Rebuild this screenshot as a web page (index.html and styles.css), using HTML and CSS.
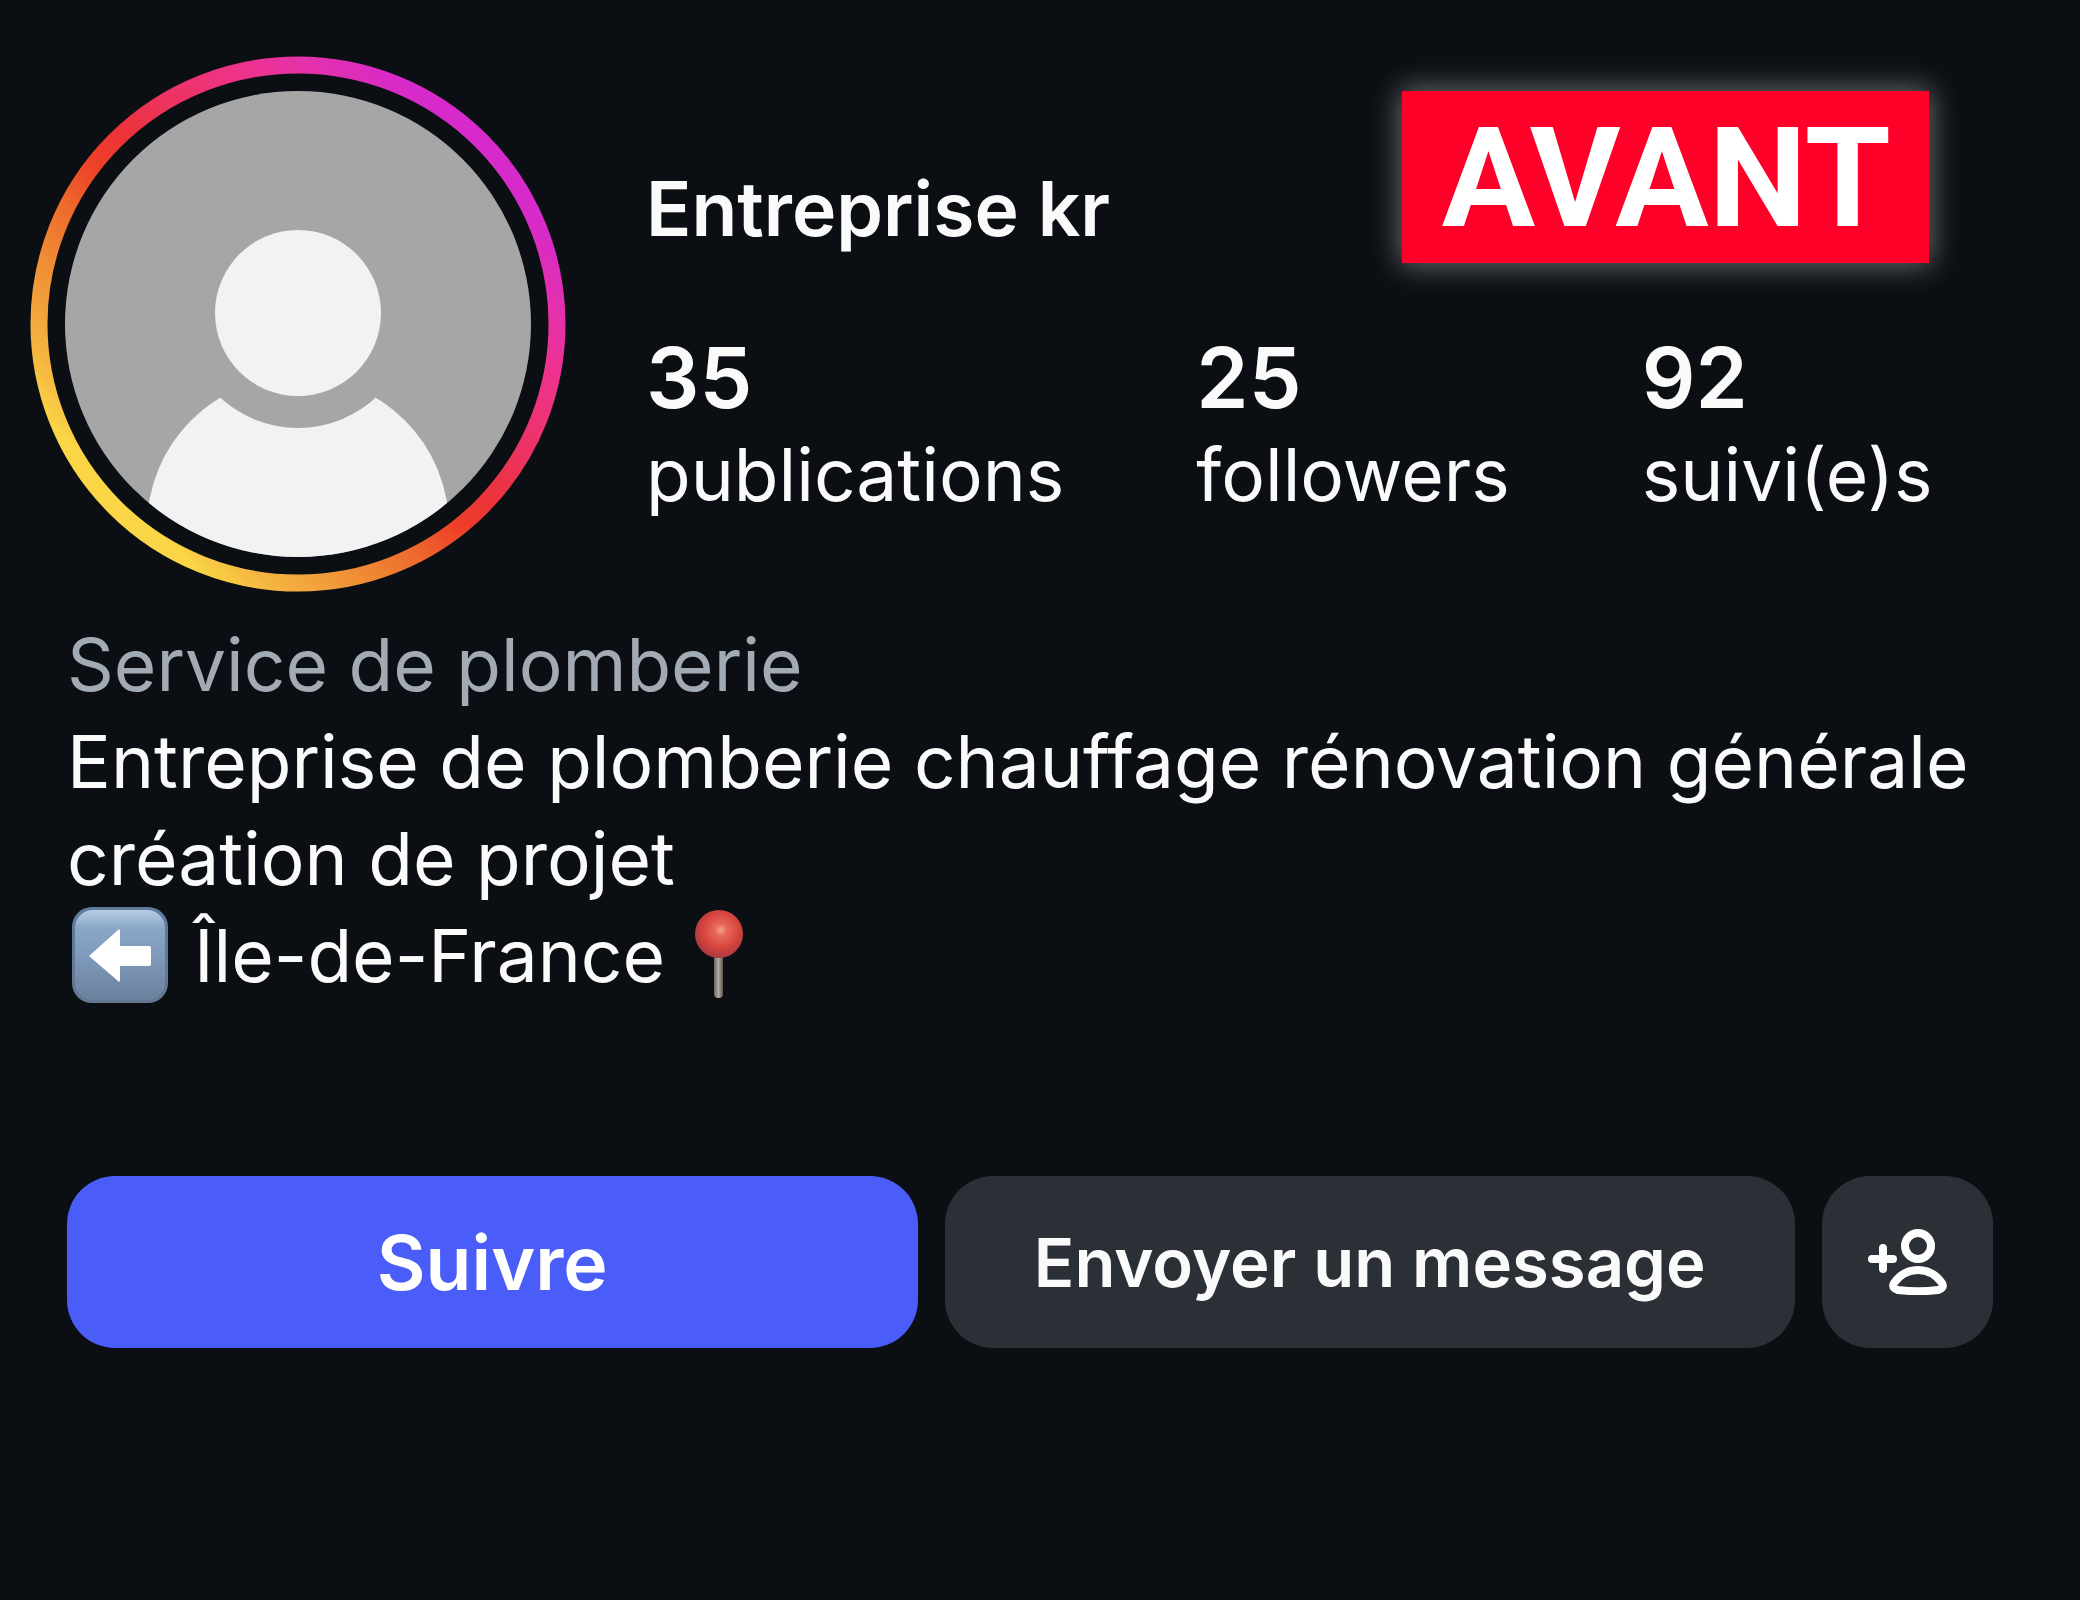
FILE: index.html
```html
<!DOCTYPE html>
<html lang="fr">

<head>
	<meta charset="UTF-8">
	<meta name="viewport"
				content="width=device-width, initial-scale=1.0">
	<title>Entreprise kr</title>
	<link rel="stylesheet" href="styles.css">
</head>

<body>
	<main class="profile">
		<span class="badge">AVANT</span>

		<header class="profile-header">
			<svg class="avatar" viewBox="0 0 536 536" role="img" aria-label="Photo de profil">
				<defs>
					<linearGradient id="ring" gradientUnits="userSpaceOnUse" x1="78" y1="458" x2="458" y2="78">
						<stop offset="0.04" stop-color="#fad646" />
						<stop offset="0.12" stop-color="#f5b540" />
						<stop offset="0.25" stop-color="#f08d35" />
						<stop offset="0.35" stop-color="#ee6a2d" />
						<stop offset="0.44" stop-color="#ee4028" />
						<stop offset="0.52" stop-color="#ec3338" />
						<stop offset="0.62" stop-color="#ed3360" />
						<stop offset="0.76" stop-color="#ee338b" />
						<stop offset="0.85" stop-color="#e531aa" />
						<stop offset="0.96" stop-color="#d62acb" />
					</linearGradient>
					<clipPath id="photo">
						<circle cx="268" cy="268" r="233" />
					</clipPath>
				</defs>
				<circle cx="268" cy="268" r="259" fill="none" stroke="url(#ring)" stroke-width="17" />
				<g clip-path="url(#photo)">
					<rect width="536" height="536" fill="#a6a6a6" />
					<circle cx="268" cy="471" r="151" fill="#f2f2f2" />
					<circle cx="268" cy="257" r="115" fill="#a6a6a6" />
					<circle cx="268" cy="257" r="83" fill="#f2f2f2" />
				</g>
			</svg>

			<div class="profile-info">
				<h1>Entreprise kr</h1>
				<ul class="stats">
					<li><strong>35</strong> publications</li>
					<li><strong>25</strong> followers</li>
					<li><strong>92</strong> suivi(e)s</li>
				</ul>
			</div>
		</header>

		<section class="bio">
			<p class="category">Service de plomberie</p>
			<p>Entreprise de plomberie chauffage rénovation générale création de projet</p>
			<p class="location">
				<svg class="arrow" viewBox="0 0 96 96" role="img" aria-label="Flèche gauche">
					<defs>
						<linearGradient id="key" x1="0" y1="0" x2="0" y2="1">
							<stop offset="0" stop-color="#5f7c9f" />
							<stop offset="1" stop-color="#64798f" />
						</linearGradient>
						<linearGradient id="key-face" x1="0" y1="0" x2="0" y2="1">
							<stop offset="0" stop-color="#b9cce2" />
							<stop offset="0.2" stop-color="#8ba7c8" />
							<stop offset="0.5" stop-color="#7f9abb" />
							<stop offset="1" stop-color="#6b819d" />
						</linearGradient>
					</defs>
					<rect width="96" height="96" rx="20" fill="url(#key)" />
					<rect x="3" y="3" width="90" height="90" rx="18" fill="url(#key-face)" />
					<path d="M17 49 L46 23 Q48 21 48 24 V39 H77 Q79 39 79 41 V57 Q79 59 77 59 H48 V73 Q48 76 46 74 Z" fill="#fff" />
				</svg>
				<span>Île-de-France</span>
				<svg class="pin" viewBox="0 0 48 88" role="img" aria-label="Épingle">
					<defs>
						<radialGradient id="pin-head" cx="0.54" cy="0.42" r="0.58">
							<stop offset="0" stop-color="#f3a08c" />
							<stop offset="0.22" stop-color="#e8685a" />
							<stop offset="0.65" stop-color="#d6433d" />
							<stop offset="1" stop-color="#a93a40" />
						</radialGradient>
						<linearGradient id="pin-needle">
							<stop offset="0" stop-color="#6d6560" />
							<stop offset="0.5" stop-color="#b5aaa1" />
							<stop offset="1" stop-color="#5e5652" />
						</linearGradient>
					</defs>
					<rect x="19" y="42" width="9" height="46" rx="4" fill="url(#pin-needle)" />
					<circle cx="24" cy="24" r="24" fill="url(#pin-head)" />
				</svg>
			</p>
		</section>

		<div class="actions">
			<button class="btn follow" type="button">Suivre</button>
			<button class="btn message" type="button">Envoyer un message</button>
			<button class="btn add" type="button" aria-label="Suggestions">
				<svg viewBox="0 0 81 66">
					<path d="M5 30 H26 M16 19 V40" />
					<circle cx="51" cy="17" r="13" />
					<path d="M51 41 C62 41 70 47 75 54 C77 58 75 60 71 61 C59 62.5 43 62.5 31 61 C27 60 25 58 27 54 C32 47 40 41 51 41 Z" />
				</svg>
			</button>
		</div>
	</main>
</body>

</html>
```
FILE: styles.css
```css
* {
	box-sizing: border-box;
}

body {
	background-color: #0b0f14;
	color: #fafafa;
	font-family: Inter, "Liberation Sans", sans-serif;
	font-size: 73px;
	line-height: 97px;
	margin: 0;
	min-height: 100vh;
}

h1,
p,
ul {
	margin: 0;
	padding: 0;
}

.profile {
	padding: 56px 87px 0 67px;
	position: relative;
}

.badge {
	background-color: #ff0029;
	box-shadow: 0 0 28px 2px rgba(255, 255, 255, 0.4);
	color: #fff;
	font-family: Roboto, sans-serif;
	font-size: 139px;
	font-weight: 700;
	line-height: 168px;
	padding: 4px 38px 0 40px;
	position: absolute;
	right: 151px;
	top: 91px;
}

.profile-header {
	display: flex;
	gap: 80px;
	margin-left: -37px;
}

.avatar {
	flex: none;
	height: 536px;
	width: 536px;
}

.profile-info {
	padding-top: 104px;
}

h1 {
	font-size: 75px;
	font-weight: 600;
}

.stats {
	display: flex;
	gap: 132px;
	list-style-type: none;
	margin-top: 72px;
}

.stats strong {
	display: block;
	font-size: 84px;
	font-weight: 600;
}

.bio {
	margin-top: 24px;
}

.category {
	color: #a2aab4;
}

.location {
	display: flex;
	gap: 26px;
}

.arrow {
	height: 96px;
	margin-left: 5px;
	width: 96px;
}

.pin {
	height: 88px;
	margin: 3px 0 0 4px;
	width: 48px;
}

.actions {
	display: flex;
	gap: 27px;
	margin-top: 172px;
}

.btn {
	background-color: #2b3037;
	border: none;
	border-radius: 48px;
	color: #fafafa;
	cursor: pointer;
	flex: 1;
	font-family: inherit;
	font-size: 67px;
	font-weight: 600;
	height: 172px;
	padding: 0;
}

.follow {
	background-color: #4a5df9;
	color: #fff;
	font-size: 75px;
}

.add {
	align-items: center;
	display: flex;
	flex: none;
	justify-content: center;
	width: 171px;
}

.add svg {
	fill: none;
	height: 66px;
	stroke: #fff;
	stroke-linecap: round;
	stroke-linejoin: round;
	stroke-width: 8px;
	width: 81px;
}
```
